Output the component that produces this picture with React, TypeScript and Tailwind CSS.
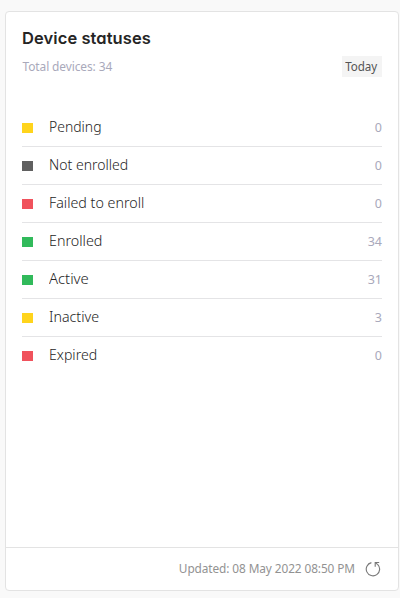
import React from "react";

type Status = { label: string; count: number; color: string; scale: string };

const statuses: Status[] = [
  { label: "Pending", count: 0, color: "bg-[#ffd41c]", scale: "scale-x-[.93]" },
  { label: "Not enrolled", count: 0, color: "bg-[#606060]", scale: "scale-x-[.935]" },
  { label: "Failed to enroll", count: 0, color: "bg-[#f0525c]", scale: "scale-x-[.95]" },
  { label: "Enrolled", count: 34, color: "bg-[#31ba5b]", scale: "scale-x-[.955]" },
  { label: "Active", count: 31, color: "bg-[#31ba5b]", scale: "scale-x-[.99]" },
  { label: "Inactive", count: 3, color: "bg-[#ffd41c]", scale: "scale-x-[.95]" },
  { label: "Expired", count: 0, color: "bg-[#f0525c]", scale: "scale-x-[.94]" },
];

function RefreshIcon() {
  return (
    <svg width="16" height="16" viewBox="0 0 16 16" fill="none" stroke="#777777" strokeWidth="1.1">
      <path d="M6.4 1.6A6.7 6.7 0 1 0 12.6 3.3" />
      <path d="M14.2 1.5H10.2V5.8" />
      <path d="M10.3 1.6L12.8 3.6" />
    </svg>
  );
}

export default function App() {
  return (
    <main className="h-[598px] w-[400px] bg-[#f9f9f9] pl-[5px] pt-[11px] font-['Noto_Sans',sans-serif]">
      <section className="flex h-[580px] w-[394px] flex-col rounded-[4px] border border-[#e3e3e3] bg-white">
        <header className="pl-4 pr-[16.5px] pt-4">
          <h1 className="h-5 whitespace-nowrap font-['Inter',sans-serif] text-[16.5px] font-semibold leading-5 tracking-[0.08px] text-[#252525] [font-feature-settings:'cv11']">
            Device statuses
          </h1>
          <div className="mt-2 flex h-[21px] items-center justify-between">
            <span className="origin-left scale-x-[.955] pl-[0.5px] text-[12.5px] leading-[21px] tracking-[-0.1px] text-[#a9a9bb]">Total devices: 34</span>
            <span className="flex h-[21px] w-10 items-center justify-center bg-[#f4f4f4] pt-px text-[12.5px] tracking-[-0.1px] text-[#555]">
              <span className="scale-x-[.93]">Today</span>
            </span>
          </div>
        </header>
        <ul className="mt-8 pl-4 pr-[16.5px]">
          {statuses.map((s) => (
            <li key={s.label} className="flex h-[38px] items-center border-b border-[#e4e4e6] last:border-transparent">
              <span className={`mt-px h-[10px] w-[11px] ${s.color}`} />
              <span className={`-mt-[3px] ml-4 origin-left whitespace-nowrap text-[15px] font-[350] text-[#252525] ${s.scale}`}>{s.label}</span>
              <span className="-mr-[0.5px] ml-auto mt-px text-[12.5px] text-[#a9a9bb]">{s.count}</span>
            </li>
          ))}
        </ul>
        <footer className="mt-auto flex h-[43px] items-center justify-end gap-[10px] border-t border-[#e3e3e3] pr-[17px]">
          <span className="origin-right scale-x-[.947] whitespace-nowrap text-[12.5px] tracking-[-0.1px] text-[#929292]">Updated: 08 May 2022 08:50 PM</span>
          <RefreshIcon />
        </footer>
      </section>
    </main>
  );
}
